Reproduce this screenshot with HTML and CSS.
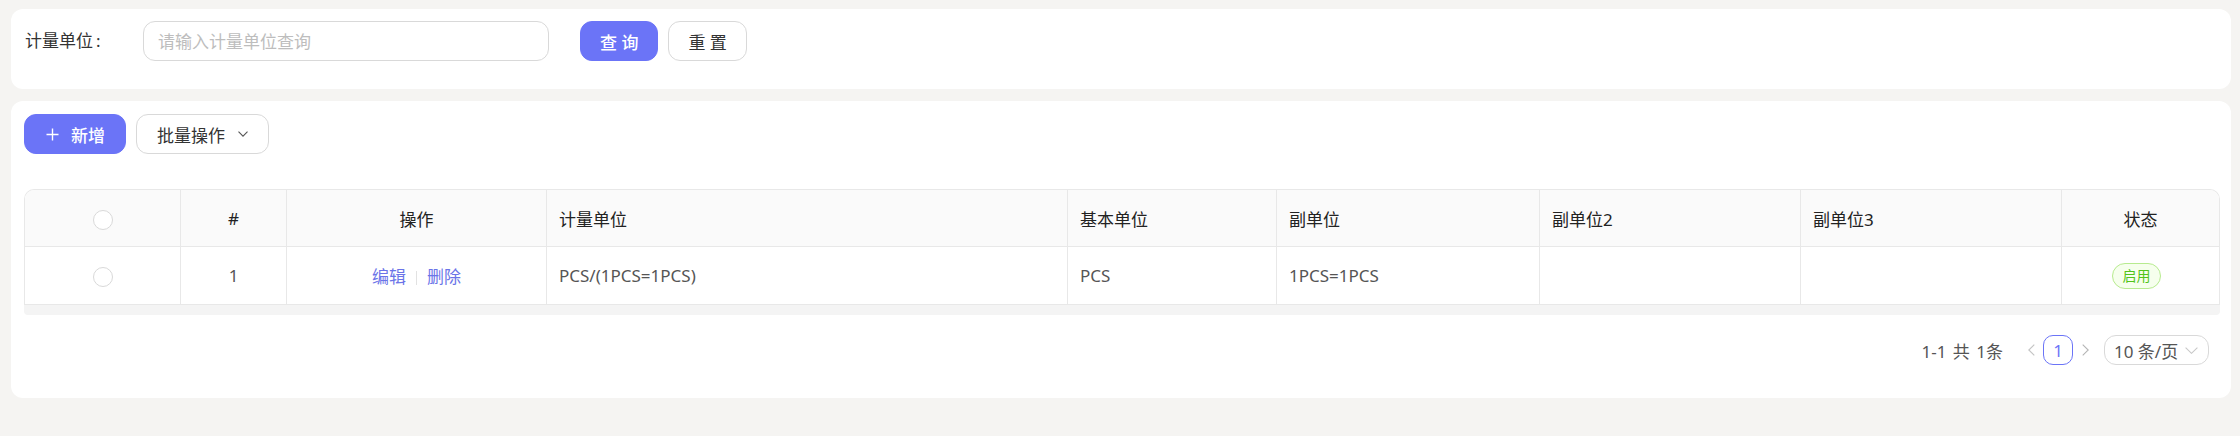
FILE: index.html
```html
<!DOCTYPE html>
<html lang="zh-CN">
<head>
<meta charset="utf-8">
<title>计量单位</title>
<link rel="stylesheet" href="styles.css">
</head>
<body>
<div class="page">
  <div class="card search">
    <label class="form-label">计量单位<span class="colon">:</span></label>
    <input class="input" type="text" placeholder="请输入计量单位查询">
    <div class="search-actions">
      <button class="btn btn-primary">查 询</button>
      <button class="btn">重 置</button>
    </div>
  </div>

  <div class="card list">
    <div class="toolbar">
      <button class="btn btn-primary btn-add">
        <svg class="plus" width="13" height="13" viewBox="0 0 13 13"><path d="M6.5 0.5v12M0.5 6.5h12" stroke="#fff" stroke-width="1.4" fill="none"/></svg>
        <span>新增</span>
      </button>
      <button class="btn btn-batch">
        <span>批量操作</span>
        <svg class="caret" width="10" height="6" viewBox="0 0 10 6"><path d="M0.5 0.7L5 5.2L9.5 0.7" stroke="#555" stroke-width="1.1" fill="none"/></svg>
      </button>
    </div>

    <div class="table-wrap">
      <table class="table">
        <colgroup>
          <col class="c-check"><col class="c-idx"><col class="c-op"><col class="c-unit"><col class="c-base"><col class="c-sub"><col class="c-sub2"><col class="c-sub3"><col class="c-status">
        </colgroup>
        <thead>
          <tr>
            <th class="center"><span class="radio"></span></th>
            <th class="center">#</th>
            <th class="center">操作</th>
            <th>计量单位</th>
            <th>基本单位</th>
            <th>副单位</th>
            <th>副单位2</th>
            <th>副单位3</th>
            <th class="center last">状态</th>
          </tr>
        </thead>
        <tbody>
          <tr>
            <td class="center"><span class="radio"></span></td>
            <td class="center">1</td>
            <td class="center"><a class="link">编辑</a><span class="divider"></span><a class="link">删除</a></td>
            <td>PCS/(1PCS=1PCS)</td>
            <td>PCS</td>
            <td>1PCS=1PCS</td>
            <td></td>
            <td></td>
            <td class="center last"><span class="tag">启用</span></td>
          </tr>
        </tbody>
      </table>
    </div>
    <div class="hscroll"></div>

    <div class="pagination">
      <span class="total">1-1 共 1条</span>
      <span class="pg-arrow">
        <svg width="7" height="12" viewBox="0 0 7 12"><path d="M6.3 0.6L0.8 6L6.3 11.4" stroke="#c4c4c4" stroke-width="1.1" fill="none"/></svg>
      </span>
      <span class="pg-item active">1</span>
      <span class="pg-arrow">
        <svg width="7" height="12" viewBox="0 0 7 12"><path d="M0.7 0.6L6.2 6L0.7 11.4" stroke="#b5b5b5" stroke-width="1.1" fill="none"/></svg>
      </span>
      <span class="pg-size">
        <span>10 条/页</span>
        <svg width="13" height="7" viewBox="0 0 13 7"><path d="M0.6 0.6L6.5 6.3L12.4 0.6" stroke="#c8c8c8" stroke-width="1.1" fill="none"/></svg>
      </span>
    </div>
  </div>
</div>
</body>
</html>
```

FILE: styles.css
```css
* {
  box-sizing: border-box;
}

html, body {
  margin: 0;
  background: #f5f4f2;
}

body {
  font-family: "Noto Sans", "Noto Sans CJK SC", sans-serif;
  font-size: 17px;
  color: #333;
}

.page {
  padding: 9px 9px 0 11px;
  display: flex;
  flex-direction: column;
  gap: 12px;
}

.card {
  background: #fff;
  border-radius: 12px;
}

/* search card */
.search {
  display: flex;
  align-items: flex-start;
  padding: 12px 14px 28px 14px;
  height: 80px;
}

.form-label {
  width: 118px;
  height: 40px;
  line-height: 40px;
  color: #333;
  font-size: 17px;
  font-weight: 400;
}

.colon {
  margin-left: 3px;
}

.input {
  width: 406px;
  height: 40px;
  border: 1px solid #d9d9d9;
  border-radius: 12px;
  padding: 0 14px;
  font-family: inherit;
  font-size: 17px;
  color: #333;
  outline: none;
  background: #fff;
}

.input::placeholder {
  color: #bdbdbd;
}

.search-actions {
  display: flex;
  gap: 10px;
  margin-left: 31px;
}

.btn {
  height: 40px;
  border: 1px solid #d9d9d9;
  border-radius: 12px;
  background: #fff;
  color: #333;
  font-family: inherit;
  font-size: 17px;
  padding: 0 19px;
  display: inline-flex;
  align-items: center;
  justify-content: center;
  white-space: pre;
  cursor: pointer;
}

.btn-primary {
  background: #6b74f7;
  border-color: #6b74f7;
  color: #fff;
  font-weight: 500;
}

/* list card */
.list {
  padding: 13px 11px 33px 13px;
}

.toolbar {
  display: flex;
  gap: 10px;
}

.btn-add {
  width: 102px;
  padding: 0 20px 0 21px;
  gap: 12px;
}

.btn-batch {
  width: 133px;
  padding: 0 20px;
  gap: 13px;
  color: #333;
}

.table-wrap {
  margin-top: 35px;
  border: 1px solid #e8e8e8;
  border-bottom: none;
  border-radius: 10px 10px 0 0;
  overflow: hidden;
}

.table {
  width: 100%;
  border-collapse: separate;
  border-spacing: 0;
  table-layout: fixed;
}

.c-check { width: 156px; }
.c-idx { width: 106px; }
.c-op { width: 260px; }
.c-unit { width: 521px; }
.c-base { width: 209px; }
.c-sub { width: 263px; }
.c-sub2 { width: 261px; }
.c-sub3 { width: 261px; }
.c-status { width: 157px; }

.table th,
.table td {
  padding: 0 12px;
  border-right: 1px solid #e8e8e8;
  border-bottom: 1px solid #e8e8e8;
  text-align: left;
  font-size: 17px;
  white-space: nowrap;
}

.table th {
  height: 57px;
  background: #fafafa;
  color: #222;
  font-weight: 400;
}

.table td {
  height: 58px;
  background: #fff;
  color: #555;
}

.table .center {
  text-align: center;
}

.table .last {
  border-right: none;
}

.radio {
  display: inline-block;
  width: 20px;
  height: 20px;
  border: 1px solid #d9d9d9;
  border-radius: 50%;
  background: #fff;
  vertical-align: middle;
}

.link {
  color: #6b74e8;
  cursor: pointer;
}

.divider {
  display: inline-block;
  width: 1px;
  height: 14px;
  background: #e2e2e2;
  margin: 0 10px;
  vertical-align: middle;
}

.tag {
  display: inline-block;
  width: 49px;
  height: 26px;
  line-height: 24px;
  margin-right: 8px;
  border: 1px solid #b7eb8f;
  border-radius: 13px;
  background: #f6ffed;
  color: #52c41a;
  font-size: 14px;
  text-align: center;
  vertical-align: middle;
}

.hscroll {
  height: 10px;
  background: #f4f4f4;
  border-radius: 0 0 4px 4px;
}

/* pagination */
.pagination {
  margin-top: 20px;
  height: 30px;
  display: flex;
  align-items: center;
  justify-content: flex-end;
  padding-right: 11px;
  font-size: 17px;
  color: #555;
}

.total {
  margin-right: 16px;
  word-spacing: 2px;
}

.pg-arrow {
  width: 24px;
  height: 30px;
  display: inline-flex;
  align-items: center;
  justify-content: center;
}

.pg-item {
  width: 30px;
  height: 30px;
  border-radius: 10px;
  display: inline-flex;
  align-items: center;
  justify-content: center;
}

.pg-item.active {
  border: 1px solid #6b74f7;
  color: #6b74f7;
}

.pg-size {
  margin-left: 7px;
  width: 105px;
  height: 30px;
  border: 1px solid #d9d9d9;
  border-radius: 12px;
  display: inline-flex;
  align-items: center;
  padding: 0 10px 0 9px;
  justify-content: space-between;
  color: #555;
}
```
